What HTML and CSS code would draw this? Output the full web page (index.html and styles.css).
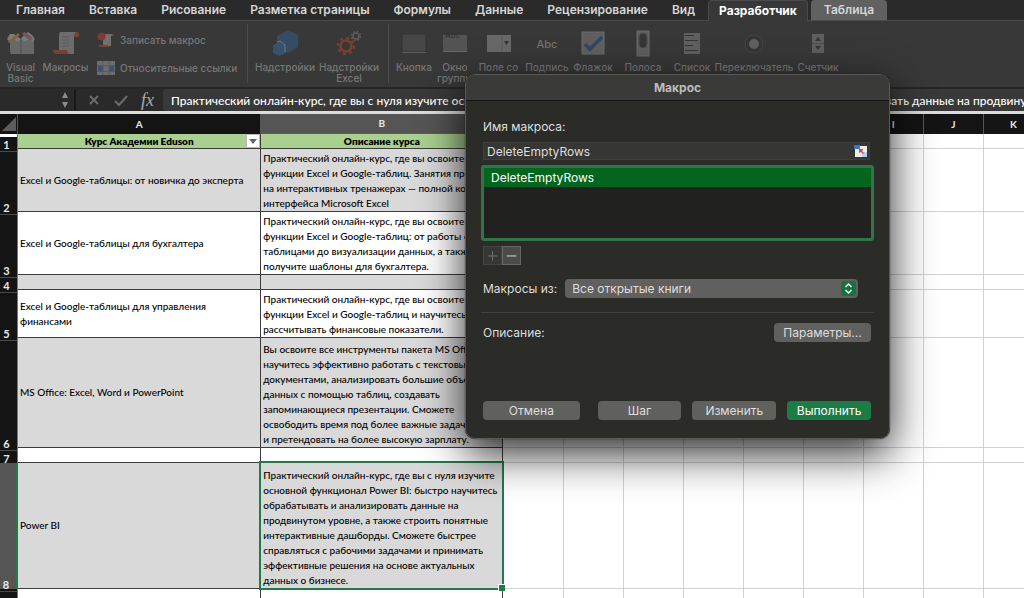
FILE: index.html
```html
<!DOCTYPE html>
<html lang="ru">
<head>
<meta charset="utf-8">
<title>Макрос</title>
<link rel="stylesheet" href="styles.css">
</head>
<body>
<div class="app">
  <nav class="tabs">
    <button class="tab">Главная</button>
    <button class="tab">Вставка</button>
    <button class="tab">Рисование</button>
    <button class="tab">Разметка страницы</button>
    <button class="tab">Формулы</button>
    <button class="tab">Данные</button>
    <button class="tab">Рецензирование</button>
    <button class="tab">Вид</button>
    <button class="tab tab-active">Разработчик</button>
    <button class="tab tab-context">Таблица</button>
  </nav>

  <div class="ribbon">
    <div class="group group-code">
      <button class="tool">
        <svg class="icon" viewBox="0 0 28 28"><path d="M3 10h11v15H4l-1-2zM14 10h13v15H14z" fill="#737373"/><path d="M14 10v15" stroke="#595959"/><path d="M0 10l3-5h4l7 5-3 3-5-3-3 3z" fill="#8c8c8c"/><path d="M28 10l-3-4-4-3-7 6 3 4 5-3 3 3z" fill="#8c8c8c"/><path d="M1 12l3-2 7-6 2 2-8 7-3 1z" fill="#8c7238"/><path d="M15 4l3-1 8 6-2 3-8-6z" fill="#835c69"/></svg>
        <span>Visual<br>Basic</span>
      </button>
      <button class="tool">
        <svg class="icon" viewBox="0 0 28 28"><path d="M8 3h17q3 0 2 5h-5V5z" fill="#814731"/><path d="M8 3h16q-2 1-2 4v18H7V6q0-2 1-3z" fill="#7a7a7a"/><path d="M1 21h14q0 4 3 4H5q-4 0-4-4z" fill="#86452d"/><path d="M10 8h7M10 11h7M10 14h7M10 17h7" stroke="#626262"/></svg>
        <span>Макросы</span>
      </button>
      <div class="small-tools">
        <button class="small-tool">
          <svg class="icon-small" viewBox="0 0 18 16"><path d="M6 2h11v2h-3z" fill="#814731"/><path d="M6 2h9q-1 1-1 3v9H6z" fill="#7a7a7a"/><path d="M1 13h10l2 2H3z" fill="#86452d"/><circle cx="4.500" cy="4.500" r="4" fill="#8a3b35"/></svg>
          <span>Записать макрос</span>
        </button>
        <button class="small-tool">
          <svg class="icon-small" viewBox="0 0 18 16"><path d="M0 1h18v14H0z" fill="#777"/><path d="M1 6h5v5H1zM12 6h5v5h-5z" fill="#3c587b"/><path d="M0 5.500h18M0 11.500h18M6 1v14M12 1v14" stroke="#606060"/></svg>
          <span>Относительные ссылки</span>
        </button>
      </div>
    </div>
    <div class="group group-addins">
      <button class="tool">
        <svg class="icon" viewBox="0 0 28 28"><path d="M17 1l10 5v12l-10 6-11-6V7z" fill="#35516e"/><path d="M8 13l7 3v8l-7 3-6-3v-8z" fill="#38587a"/><path d="M6 13l3-1 5 4v7" fill="none" stroke="#7d8791"/></svg>
        <span>Надстройки</span>
      </button>
      <button class="tool">
        <svg class="icon" viewBox="0 0 28 28"><circle cx="11" cy="17" r="5.500" fill="none" stroke="#8b432b" stroke-width="2.500"/><circle cx="11" cy="17" r="8" fill="none" stroke="#8b432b" stroke-width="2.500" stroke-dasharray="2.800 3.483"/><circle cx="21" cy="7" r="3" fill="none" stroke="#666" stroke-width="1.500"/><circle cx="21" cy="7" r="4.500" fill="none" stroke="#666" stroke-width="1.500" stroke-dasharray="1.770 1.770"/></svg>
        <span>Надстройки<br>Excel</span>
      </button>
    </div>
    <div class="group group-controls">
      <button class="tool"><svg class="icon" viewBox="0 0 28 28"><rect x="2" y="5" width="24" height="18" rx="1" fill="#4a4a4a" stroke="#303030"/><path d="M2 23.500h24" stroke="#686868"/></svg><span>Кнопка</span></button>
      <button class="tool"><svg class="icon" viewBox="0 0 28 28"><rect x="2" y="6" width="24" height="16" fill="#5c5c5c"/><path d="M2 22.500h24" stroke="#747474"/><text class="glyph-small" x="4" y="9">Abc</text></svg><span>Окно<br>группы</span></button>
      <button class="tool"><svg class="icon" viewBox="0 0 28 28"><rect x="2" y="6" width="24" height="17" fill="#747474"/><path d="M17 7v15" stroke="#606060"/><path d="M19 12h5l-2.500 4z" fill="#333"/></svg><span>Поле со</span></button>
      <button class="tool"><svg class="icon" viewBox="0 0 28 28"><text class="glyph" x="14" y="19" text-anchor="middle">Abc</text></svg><span>Подпись</span></button>
      <button class="tool"><svg class="icon" viewBox="0 0 28 28"><rect x="3" y="3" width="22" height="22" fill="#696969" stroke="#7b7b7b"/><path d="M6 15l5 5L23 8" fill="none" stroke="#344a6b" stroke-width="3.500"/></svg><span>Флажок</span></button>
      <button class="tool"><svg class="icon" viewBox="0 0 28 28"><rect x="8" y="2" width="12" height="25" fill="#686868" stroke="#777"/><rect x="10" y="4" width="8" height="15" rx="4" fill="#363636" stroke="#555"/></svg><span>Полоса</span></button>
      <button class="tool"><svg class="icon" viewBox="0 0 28 28"><rect x="6" y="4" width="16" height="21" fill="#6a6a6a"/><path d="M7 6.500h9M7 11.500h13M7 16.500h8M7 21.500h13" stroke="#343434" stroke-width="1"/></svg><span>Список</span></button>
      <button class="tool"><svg class="icon" viewBox="0 0 28 28"><circle cx="14" cy="15" r="9" fill="#363636" stroke="#484848"/><circle cx="14" cy="15" r="5" fill="#6c6c6c"/></svg><span>Переключатель</span></button>
      <button class="tool"><svg class="icon" viewBox="0 0 28 28"><rect x="8" y="5" width="12" height="19" fill="#696969"/><path d="M8 14.500h12" stroke="#555"/><path d="M11 12l3-4 3 4zM11 17l3 4 3-4z" fill="#353535"/></svg><span>Счетчик</span></button>
    </div>
  </div>

  <div class="formula-bar">
    <div class="name-box">
      <svg class="spinner" viewBox="0 0 8 18"><path d="M1 7l3-6 3 6zM1 11l3 6 3-6z" fill="#8c8c8c"/></svg>
    </div>
    <div class="formula-actions">
      <svg class="action" viewBox="0 0 14 14"><path d="M3 3l8 8M11 3l-8 8" stroke="#6b6b6b" stroke-width="2"/></svg>
      <svg class="action" viewBox="0 0 14 14"><path d="M1 8l4 4 8-9" fill="none" stroke="#6b6b6b" stroke-width="2"/></svg>
      <span class="fx">fx</span>
    </div>
    <input class="formula-input" aria-label="Строка формул" value="Практический онлайн-курс, где вы с нуля изучите основной функционал Power BI: быстро научитесь обрабатывать и анализировать данные на продвинутом уровне">
  </div>

  <table class="sheet">
    <colgroup><col class="col-num"><col class="col-a"><col class="col-b"><col class="col-std"><col class="col-std"><col class="col-std"><col class="col-std"><col class="col-std"><col class="col-std"><col class="col-std"><col class="col-std"><col class="col-std"></colgroup>
    <thead>
      <tr><th class="corner"><svg viewBox="0 0 14 14"><path d="M14 0v14H0z" fill="#5c5c5c"/></svg></th><th>A</th><th class="selected">B</th><th>C</th><th>D</th><th>E</th><th>F</th><th>G</th><th>H</th><th>I</th><th>J</th><th>K</th></tr>
    </thead>
    <tbody>
      <tr class="row-1"><th>1</th><td class="title"><div class="filter-cell">Курс Академии Eduson<button class="filter" aria-label="Фильтр"><svg viewBox="0 0 12 12"><path d="M2 4h8l-4 5z" fill="#666"/></svg></button></div></td><td class="title">Описание курса</td><td></td><td></td><td></td><td></td><td></td><td></td><td></td><td></td><td></td></tr>
      <tr class="row-2 shaded"><th>2</th><td>Excel и Google-таблицы: от новичка до эксперта</td><td>Практический онлайн-курс, где вы освоите<br>функции Excel и Google-таблиц. Занятия проходят<br>на интерактивных тренажерах — полной копии<br>интерфейса Microsoft Excel</td><td></td><td></td><td></td><td></td><td></td><td></td><td></td><td></td><td></td></tr>
      <tr class="row-3"><th>3</th><td>Excel и Google-таблицы для бухгалтера</td><td>Практический онлайн-курс, где вы освоите<br>функции Excel и Google-таблиц: от работы с<br>таблицами до визуализации данных, а также<br>получите шаблоны для бухгалтера.</td><td></td><td></td><td></td><td></td><td></td><td></td><td></td><td></td><td></td></tr>
      <tr class="row-4 shaded"><th>4</th><td></td><td></td><td></td><td></td><td></td><td></td><td></td><td></td><td></td><td></td><td></td></tr>
      <tr class="row-5"><th>5</th><td>Excel и Google-таблицы для управления<br>финансами</td><td>Практический онлайн-курс, где вы освоите<br>функции Excel и Google-таблиц и научитесь<br>рассчитывать финансовые показатели.</td><td></td><td></td><td></td><td></td><td></td><td></td><td></td><td></td><td></td></tr>
      <tr class="row-6 shaded"><th>6</th><td>MS Office: Excel, Word и PowerPoint</td><td>Вы освоите все инструменты пакета MS Office,<br>научитесь эффективно работать с текстовыми<br>документами, анализировать большие объемы<br>данных с помощью таблиц, создавать<br>запоминающиеся презентации. Сможете<br>освободить время под более важные задачи<br>и претендовать на более высокую зарплату.</td><td></td><td></td><td></td><td></td><td></td><td></td><td></td><td></td><td></td></tr>
      <tr class="row-7"><th>7</th><td></td><td></td><td></td><td></td><td></td><td></td><td></td><td></td><td></td><td></td><td></td></tr>
      <tr class="row-8 shaded"><th class="selected">8</th><td>Power BI</td><td class="active-cell">Практический онлайн-курс, где вы с нуля изучите<br>основной функционал Power BI: быстро научитесь<br>обрабатывать и анализировать данные на<br>продвинутом уровне, а также строить понятные<br>интерактивные дашборды. Сможете быстрее<br>справляться с рабочими задачами и принимать<br>эффективные решения на основе актуальных<br>данных о бизнесе.</td><td></td><td></td><td></td><td></td><td></td><td></td><td></td><td></td><td></td></tr>
      <tr class="row-9"><th></th><td></td><td></td><td></td><td></td><td></td><td></td><td></td><td></td><td></td><td></td><td></td></tr>
    </tbody>
  </table>

  <section class="dialog" role="dialog" aria-labelledby="dialog-title">
    <h1 class="dialog-title" id="dialog-title">Макрос</h1>
    <div class="dialog-body">
      <label class="name-label" for="macro-name">Имя макроса:</label>
      <div class="name-field">
        <input id="macro-name" value="DeleteEmptyRows">
        <svg class="range-icon" viewBox="0 0 14 12"><path d="M1 1h12v11H1z" fill="#eee"/><path d="M8 7h5v5H8z" fill="#b7cfe8"/><path d="M0 0h6v4H0z" fill="#3478c5"/><path d="M5 4h4v1L8 6l2 2-1 1-2-2-2 1z" fill="#d34d54"/></svg>
      </div>
      <ul class="macro-list" role="listbox" aria-label="Макросы">
        <li role="option" aria-selected="true">DeleteEmptyRows</li>
      </ul>
      <div class="list-buttons">
        <button aria-label="Добавить" disabled><svg viewBox="0 0 18 18"><path d="M4 9.500h10M9 4.500v10" stroke="#777"/></svg></button>
        <button class="remove" aria-label="Удалить"><svg viewBox="0 0 18 18"><path d="M4 9.500h10" stroke="#e2e2e2" stroke-width="1"/></svg></button>
      </div>
      <div class="source-row">
        <label for="source">Макросы из:</label>
        <div class="source-select">
          <select id="source"><option>Все открытые книги</option></select>
          <svg class="chevrons" viewBox="0 0 15 15"><rect width="15" height="15" rx="3" fill="#18723f"/><path d="M4.500 6l3-3 3 3M4.500 9l3 3 3-3" fill="none" stroke="#f0f0f0" stroke-width="1.500"/></svg>
        </div>
      </div>
      <hr>
      <div class="description-row">
        <span>Описание:</span>
        <button class="push options">Параметры...</button>
      </div>
      <div class="dialog-actions">
        <button class="push">Отмена</button>
        <button class="push">Шаг</button>
        <button class="push">Изменить</button>
        <button class="push primary">Выполнить</button>
      </div>
    </div>
  </section>
</div>
</body>
</html>
```

FILE: styles.css
```css
* { box-sizing: border-box; }

body {
  margin: 0;
  background: #fff;
  font-family: Inter, "Liberation Sans", sans-serif;
}

button, input, select {
  margin: 0;
  padding: 0;
  border: 0;
  background: none;
  color: inherit;
  font: inherit;
}

svg { display: block; }

.app {
  position: relative;
  height: 100vh;
  overflow: hidden;
}

/* Ribbon tabs */
.tabs {
  display: flex;
  height: 21px;
  padding-left: 4px;
  background: #2a2a2a;
  border-bottom: 1px solid #4a4a4a;
  color: #d6d6d6;
  font-size: 12px;
  font-weight: 600;
}

.tab {
  padding: 0 12px;
  line-height: 20px;
  white-space: nowrap;
}

.tab-active {
  height: 21px;
  margin-left: 1px;
  padding: 0 10px;
  border: 1px solid #4a4a4a;
  border-bottom: 0;
  border-radius: 4px 4px 0 0;
  background: #383838;
  color: #fff;
  font-weight: 700;
}

.tab-context {
  margin-left: 3px;
  padding: 0 13px;
  border-radius: 4px 4px 0 0;
  background: #616161;
}

/* Ribbon */
.ribbon {
  display: flex;
  height: 66px;
  background: #383838;
  color: #777;
  font-size: 10px;
  font-weight: 500;
  line-height: 11px;
}

.group { display: grid; }

.group + .group { border-left: 1px solid #4c4c4c; border-image: linear-gradient(transparent 4px, #4c4c4c 4px, #4c4c4c 61px, transparent 61px) 1; }

.group-code { grid-template-columns: 41px 49px 157px; }
.group-addins { grid-template-columns: 74px 54px; padding-right: 12px; }
.group-controls { grid-template-columns: 42px 40px 47px 50px 42px 58px 40px 84px 44px; padding-left: 4px; }

.tool {
  display: flex;
  flex-direction: column;
  align-items: center;
  justify-content: flex-start;
  gap: 5px;
  padding-top: 8px;
  white-space: nowrap;
}

.icon {
  flex: none;
  width: 28px;
  height: 28px;
  opacity: 0.8;
}

.glyph { font-size: 11px; fill: #808080; }
.glyph-small { font-size: 8px; fill: #333; }

.small-tools {
  display: flex;
  flex-direction: column;
  gap: 12px;
  padding: 11px 0 0 7px;
}

.small-tool {
  display: flex;
  align-items: center;
  gap: 5px;
  white-space: nowrap;
}

.icon-small { flex: none; width: 18px; height: 16px; opacity: 0.85; }

/* Formula bar */
.formula-bar {
  display: flex;
  align-items: stretch;
  height: 27px;
  border-top: 2px solid #262626;
  border-bottom: 3px solid #dcdcdc;
  background: #2a2a2a;
}

.name-box {
  display: flex;
  align-items: center;
  justify-content: flex-end;
  width: 76px;
  padding-right: 5px;
  border-right: 2px solid #191919;
}

.spinner { width: 8px; height: 18px; }

.formula-actions {
  display: flex;
  align-items: center;
  gap: 13px;
  width: 87px;
  padding-left: 11px;
}

.action { flex: none; width: 14px; height: 14px; }

.fx {
  color: #aaa;
  font: italic 18px "Liberation Serif", serif;
}

.formula-input {
  flex: 1;
  min-width: 0;
  padding-left: 8px;
  border-radius: 3px 0 0 3px;
  background: #393939;
  color: #fff;
  font: 500 12px Lato, "Open Sans", sans-serif;
}

/* Worksheet */
.sheet {
  width: 1044px;
  table-layout: fixed;
  border-collapse: separate;
  border-spacing: 0;
  font: 500 10px/15px Lato, "Open Sans", sans-serif;
  color: #000;
}

.col-num { width: 18px; }
.col-a { width: 243px; }
.col-b { width: 242px; }
.col-std { width: 60px; }

.sheet th {
  padding: 0;
  background: #141414;
  color: #e8e8e8;
  font-weight: 700;
}

.sheet thead th {
  height: 20px;
  border-right: 1px solid #555;
  line-height: 19px;
}

.sheet thead .selected {
  border-bottom: 1px solid #207b48;
  background: #555;
}

.corner svg { width: 14px; height: 14px; margin-left: 2px; }

.sheet tbody th {
  border-right: 1px solid #777;
  background: linear-gradient(#141414 2px, #4a4a4a 2px, #4a4a4a 3px, #141414 3px);
  font-size: 11px;
  line-height: 8px;
  padding-right: 4px;
  vertical-align: bottom;
}

.sheet .row-1 th { background: linear-gradient(#fff 3px, #141414 3px); }

.sheet tbody .selected {
  border-right: 2px solid #207b48;
  background: #555;
}

.sheet td {
  padding: 0 0 0 2px;
  border-right: 1px solid #d2d2d2;
  border-bottom: 1px solid #d2d2d2;
  white-space: nowrap;
}

.sheet td:nth-child(2), .sheet td:nth-child(3) {
  border-color: #3c3c3c;
}

.sheet td:nth-child(3) { vertical-align: bottom; }

.shaded td:nth-child(2), .shaded td:nth-child(3) { background: #d9d9d9; }

.sheet .title {
  padding: 0;
  background: #a9d08e;
  font-weight: 800;
  line-height: 14px;
  text-align: center;
}

.filter-cell { position: relative; }

.filter {
  position: absolute;
  top: 0;
  right: 0;
  width: 14px;
  height: 14px;
  border: 1px solid #bbb;
  background: #fff;
}

.row-1 { height: 15px; }
.row-2 { height: 63px; }
.row-3 { height: 63px; }
.row-4 { height: 15px; }
.row-5 { height: 48px; }
.row-6 { height: 110px; }
.row-7 { height: 15px; }
.row-8 { height: 126px; }
.row-9 { height: 15px; }

.sheet .active-cell {
  position: relative;
  z-index: 1;
}

.active-cell::before {
  content: "";
  position: absolute;
  inset: -2px -2px -2px -2px;
  border: 2px solid #207b48;
}

.active-cell::after {
  content: "";
  position: absolute;
  right: -3px;
  bottom: -3px;
  width: 6px;
  height: 6px;
  border: 1px solid #fff;
  border-width: 1px 0 0 1px;
  background: #207b48;
}

/* Macro dialog */
.dialog {
  position: absolute;
  z-index: 2;
  top: 74px;
  left: 465px;
  width: 425px;
  border: 1px solid #5a5a58;
  border-radius: 10px;
  background: #2b2b28;
  box-shadow: 0 14px 44px rgba(0, 0, 0, 0.85), 0 0 1px #000;
  color: #dedede;
  font-size: 12px;
  overflow: hidden;
}

.dialog-title {
  margin: 0;
  border-bottom: 1px solid #141414;
  background: #3a3a38;
  color: #bdbdbd;
  font-size: 12px;
  font-weight: 700;
  line-height: 25px;
  text-align: center;
}

.dialog-body {
  display: flex;
  flex-direction: column;
  padding: 17px 15px 18px;
}

.name-label {
  padding-left: 2px;
  line-height: 18px;
}

.name-field {
  display: flex;
  align-items: center;
  height: 18px;
  margin: 6px 4px 0 2px;
  padding: 0 1px 0 3px;
  border: 1px solid #40403e;
  background: #363634;
}

.name-field input { flex: 1; min-width: 0; }

.range-icon { width: 14px; height: 12px; }

.macro-list {
  height: 76px;
  margin: 5px 0 0;
  padding: 0;
  border: 3px solid #30754a;
  border-radius: 3px;
  background: #21211f;
  list-style: none;
}

.macro-list li {
  padding-left: 7px;
  background: #04661e;
  color: #fff;
  line-height: 19px;
}

.list-buttons {
  display: flex;
  margin: 5px 0 0 2px;
}

.list-buttons button {
  width: 19px;
  height: 19px;
  border: 1px solid #444442;
  background: #363634;
}

.list-buttons .remove {
  border-color: #666664;
  background: #4b4b49;
}

.source-row {
  display: flex;
  align-items: center;
  gap: 8px;
  margin: 14px 16px 0 2px;
}

.source-select {
  position: relative;
  flex: 1;
}

.source-select select {
  width: 100%;
  height: 19px;
  padding-left: 7px;
  border-radius: 4px;
  background: #60605e;
  appearance: none;
}

.chevrons {
  position: absolute;
  top: 2px;
  right: 2px;
  width: 15px;
  height: 15px;
  pointer-events: none;
}

hr {
  width: 100%;
  margin: 14px 0 10px;
  border: 0;
  border-top: 1px solid #40403d;
}

.description-row {
  display: flex;
  align-items: center;
  justify-content: space-between;
  padding: 0 3px 0 2px;
}

.push {
  height: 19px;
  border-radius: 4px;
  background: #60605e;
  line-height: 19px;
  text-align: center;
}

.options { width: 97px; }

.dialog-actions {
  display: grid;
  grid-template-columns: 97fr 18fr 84fr 11fr 84fr 11fr 84fr;
  margin: 59px 3px 0 2px;
}

.dialog-actions .push:nth-child(1) { grid-column: 1; }
.dialog-actions .push:nth-child(2) { grid-column: 3; }
.dialog-actions .push:nth-child(3) { grid-column: 5; }
.dialog-actions .push:nth-child(4) { grid-column: 7; }

.primary { background: #1c7c46; color: #fff; }
```
